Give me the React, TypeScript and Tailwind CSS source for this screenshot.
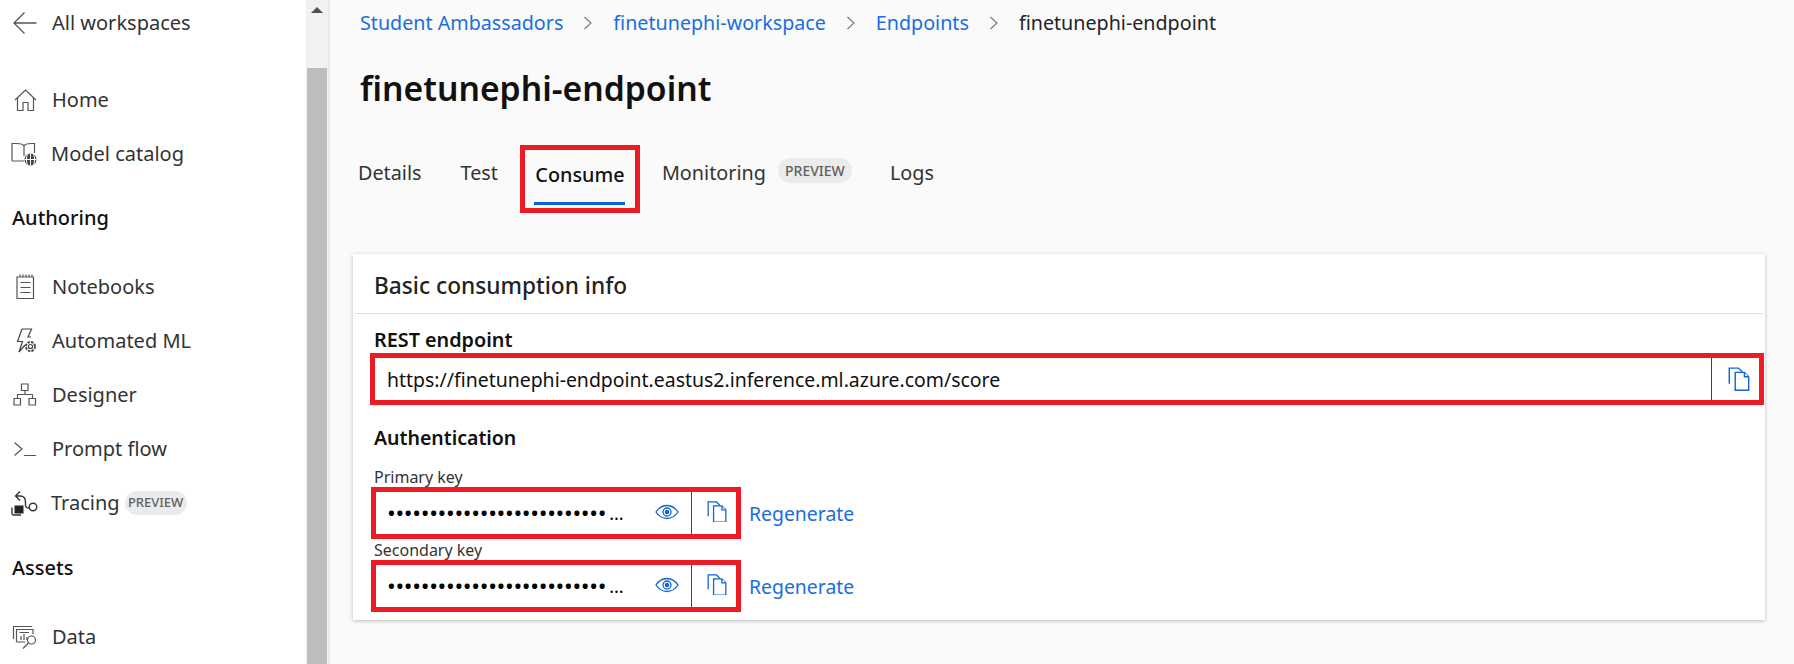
import React from "react";

const ic = { fill: "none", stroke: "#555", strokeWidth: 1.2 } as const;

const Back = () => (
  <svg width="26" height="24" viewBox="0 0 26 24" {...ic} strokeWidth={1.3}><path d="M24.5 12H2M12.5 1.5 2 12l10.500 10.500" /></svg>
);
const HomeI = () => (
  <svg width="24" height="24" viewBox="0 0 24 24" {...ic}><path d="M2 12 12.500 2 23 12M4.500 10v12.500h5.500V14.500h5v8h5.500V10" /></svg>
);
const CatalogI = () => (
  <svg width="26" height="24" viewBox="0 0 26 24" {...ic}>
    <path d="M13 19H2a1 1 0 0 1-1-1V1.500h5c3 0 6 .5 7 2.500v10M13 4c1-2 4-2.500 7-2.500h3.500V11" />
    <circle cx="19.500" cy="17.500" r="6" fill="#444" stroke="none" />
    <path d="M13.500 17.500h12M19.500 11.500v12M16.500 12.500c-1.500 3-1.500 7 0 10M22.500 12.500c1.500 3 1.500 7 0 10" stroke="#fff" strokeWidth="1" />
  </svg>
);
const NotebookI = () => (
  <svg width="20" height="26" viewBox="0 0 20 26" {...ic}><path d="M2 3h16.500v21.500H2zM5 .5V3M8 .5V3M11 .5V3M14 .5V3M17 .5V3M5.500 8.500h10M5.500 13.500h10M5.500 18.500h10" /></svg>
);
const AutoI = () => (
  <svg width="24" height="26" viewBox="0 0 24 26" {...ic} stroke="#444">
    <path d="M9 1h9.500L15 9h3M9 1 4.500 13.500h5L6 24l6-7" />
    <circle cx="17.500" cy="18.500" r="2" />
    <circle cx="17.500" cy="18.500" r="4.500" strokeDasharray="2.400 1.130" strokeWidth="2" />
  </svg>
);
const DesignerI = () => (
  <svg width="24" height="24" viewBox="0 0 24 24" {...ic}><path d="M8.500 1h6.500v6.500H8.500zM1 15.500h6.500V22H1zM16 15.500h6.500V22H16zM12 7.500v4M4.500 15.500v-4h15v4" /></svg>
);
const PromptI = () => (
  <svg width="24" height="18" viewBox="0 0 24 18" {...ic}><path d="M1.500 2.500 9 9l-7.500 6.500M11 15.500h12" /></svg>
);
const TracingI = () => (
  <svg width="28" height="26" viewBox="0 0 28 26" {...ic} stroke="#333" strokeWidth={1.4}>
    <path d="M10 1.500 5.500 6 10 10.500M5.500 6H10c4 0 5.500 3 5.500 6v3c0 2.500 2 3.500 4 2.500" />
    <circle cx="23" cy="17" r="3.800" />
    <rect x="4.500" y="15.500" width="9" height="8" fill="#222" stroke="none" />
    <path d="M2 17.500v6a1.500 1.500 0 0 0 1.500 1.500H11" />
  </svg>
);
const DataI = () => (
  <svg width="26" height="24" viewBox="0 0 26 24" {...ic}>
    <path d="M1.500 14V1.500H20M4.500 17V4.500H21V9M4.500 17H13M7.500 7.500H17" />
    <path d="M9 15v-4M12 15V9M15 15v-3" />
    <circle cx="19.500" cy="15" r="4" />
    <path d="M16.500 18 11 23.500" />
  </svg>
);
const Eye = () => (
  <svg width="24" height="16" viewBox="0 0 24 16" fill="none" stroke="#0f62d8" strokeWidth="1.300">
    <path d="M1 8c3-4.500 7-6.500 11-6.500S20 3.500 23 8c-3 4.500-7 6.500-11 6.500S4 12.500 1 8z" />
    <circle cx="12" cy="8" r="4" />
    <circle cx="12" cy="8" r="1.600" fill="#0f62d8" />
  </svg>
);
const Copy = ({ size = 20 }: { size?: number }) => (
  <svg width={size} height={size * 1.08} viewBox="0 0 20 22" fill="#fff" stroke="#0f62d8" strokeWidth="1.300">
    <path d="M1 15.500V1h8.500L13 4.500" />
    <path d="M6.500 5H15l4 4v12.500H6.500z" />
    <path d="M15 5v4h4" />
  </svg>
);

const Row = ({ icon, label, extra, tight }: { icon: React.ReactNode; label: string; extra?: React.ReactNode; tight?: boolean }) => (
  <div className="flex items-center h-[54px]">
    <div className={`flex justify-center shrink-0 ${tight ? "w-[51px] pr-[3px]" : "w-[52px] pr-[2px]"}`}>{icon}</div>
    <span className="text-[20px] text-[#333]">{label}</span>
    {extra}
  </div>
);

const Section = ({ children }: { children: React.ReactNode }) => (
  <div className="pl-[12px] text-[20px] font-medium text-[#111] leading-[26px]">{children}</div>
);

const Pill = () => (
  <span className="ml-[5px] h-[24px] w-[62px] rounded-full bg-[#ebebeb] text-[#616161] text-[13px] font-medium flex items-center justify-center">PREVIEW</span>
);

const Sidebar = () => (
  <aside className="w-[306px] shrink-0 bg-white flex flex-col">
    <div className="flex items-center h-[46px]"><div className="w-[52px] flex justify-center pr-[2px]"><Back /></div><span className="text-[20px] text-[#333]">All workspaces</span></div>
    <div className="mt-[27px]">
      <Row icon={<HomeI />} label="Home" />
      <Row icon={<CatalogI />} label="Model catalog" tight />
    </div>
    <div className="mt-[24px]"><Section>Authoring</Section></div>
    <div className="mt-[29px]">
      <Row icon={<NotebookI />} label="Notebooks" />
      <Row icon={<AutoI />} label="Automated ML" />
      <Row icon={<DesignerI />} label="Designer" />
      <Row icon={<PromptI />} label="Prompt flow" />
      <Row icon={<TracingI />} label="Tracing" tight extra={<Pill />} />
    </div>
    <div className="mt-[25px]"><Section>Assets</Section></div>
    <div className="mt-[29px]"><Row icon={<DataI />} label="Data" /></div>
  </aside>
);

const Scrollbar = () => (
  <div className="w-[24px] shrink-0 flex flex-col border-r-[2px] border-[#e9e9e9] bg-[#f1f1f1] pl-[1px] pr-[1px]">
    <div className="h-[68px] flex justify-center pt-[7px]">
      <div className="w-0 h-0 border-l-[6px] border-r-[6px] border-b-[6px] border-l-transparent border-r-transparent border-b-[#505050]" />
    </div>
    <div className="flex-1 bg-[#bdbdbd]" />
  </div>
);

const Crumb = ({ t }: { t: string }) => <span className="text-[#1a6ee0]">{t}</span>;
const Chev = () => (
  <svg width="10" height="14" viewBox="0 0 10 14" fill="none" stroke="#777" strokeWidth="1.100" className="mx-[20px]"><path d="M1.500 1 8 7l-6.500 6" /></svg>
);

const Dots = () => (
  <span className="flex items-baseline text-black">
    <span className="tracking-[1.66px] text-[18px] font-bold">{"•".repeat(26)}</span>
    <span className="text-[18px] ml-[2px]">...</span>
  </span>
);

const KeyField = ({ label }: { label: string }) => (
  <div>
    <div className="text-[16px] text-[#333] leading-[21px] pl-[3px] pt-[1px] -mb-[1px]">{label}</div>
    <div className="flex items-center">
      <div className="w-[370px] h-[52px] border-[5px] border-[#ed1c24] flex items-center bg-white">
        <div className="w-[315px] flex items-center justify-between pl-[12px] pr-[12px]">
          <Dots />
          <span className="-mt-[3px]"><Eye /></span>
        </div>
        <div className="h-full border-l border-[#444] flex-1 flex items-center justify-center pb-[3px] pl-[5px]"><Copy /></div>
      </div>
      <span className="ml-[8px] pt-[2px] text-[19.400px] text-[#1a6ee0]">Regenerate</span>
    </div>
  </div>
);

export default function App() {
  return (
    <div className="w-[1794px] h-[664px] overflow-hidden flex bg-[#fafafa]" style={{ fontFamily: '"Noto Sans", sans-serif' }}>
      <Sidebar />
      <Scrollbar />
      <main className="flex-1 min-w-0 flex flex-col">
        <div className="pl-[30px] h-[46px] flex items-center text-[19.700px] text-[#242424]">
          <Crumb t="Student Ambassadors" /><Chev /><Crumb t="finetunephi-workspace" /><Chev /><Crumb t="Endpoints" /><Chev /><span>finetunephi-endpoint</span>
        </div>
        <h1 className="pl-[30px] mt-[18px] h-[48px] flex items-center text-[33.700px] font-semibold text-[#111]">finetunephi-endpoint</h1>
        <div className="pl-[28px] mt-[33px] h-[68px] flex items-stretch text-[19.800px] text-[#333]">
          <span className="flex items-center pb-[12px]">Details</span>
          <span className="flex items-center ml-[39px] pb-[12px]">Test</span>
          <div className="ml-[22px] w-[120px] border-[5px] border-[#ed1c24] flex flex-col items-center">
            <span className="flex-1 flex items-center font-medium text-[#111] pb-[3px]">Consume</span>
            <div className="w-[91px] h-[3px] bg-[#0b5fd9] mb-[3px]" />
          </div>
          <span className="flex items-center ml-[22px] pb-[12px]">Monitoring</span>
          <div className="flex items-center pb-[17px]"><span className="ml-[12px] h-[25px] w-[74px] rounded-full bg-[#ebebeb] text-[#616161] text-[14px] font-medium flex items-center justify-center">PREVIEW</span></div>
          <span className="flex items-center ml-[38px] pb-[12px]">Logs</span>
        </div>
        <div className="ml-[23px] mt-[41px] w-[1412px] h-[366px] bg-white shadow-[0_1px_4px_rgba(0,0,0,0.25)] flex flex-col">
          <div className="mx-[2px] h-[60px] border-b border-[#ddd] flex items-center pl-[19px] pt-[6px] text-[22.700px] font-medium text-[#222]">Basic consumption info</div>
          <div className="pr-[1px] flex flex-col">
            <div className="pl-[21px] mt-[13px] text-[19.800px] font-semibold text-[#111] leading-[26px]">REST endpoint</div>
            <div className="ml-[17px] h-[52px] border-[5px] border-[#ed1c24] flex items-center bg-white">
              <span className="flex-1 pl-[12px] pt-[2px] text-[19.450px] text-[#111]">https://finetunephi-endpoint.eastus2.inference.ml.azure.com/score</span>
              <div className="w-[48px] h-full border-l border-[#444] flex items-center justify-center pl-[7px]"><Copy size={22} /></div>
            </div>
            <div className="pl-[21px] mt-[20px] text-[19.500px] font-semibold text-[#111] leading-[26px]">Authentication</div>
            <div className="mt-[15px] pl-[18px] flex flex-col">
              <KeyField label="Primary key" />
              <KeyField label="Secondary key" />
            </div>
          </div>
        </div>
      </main>
    </div>
  );
}
